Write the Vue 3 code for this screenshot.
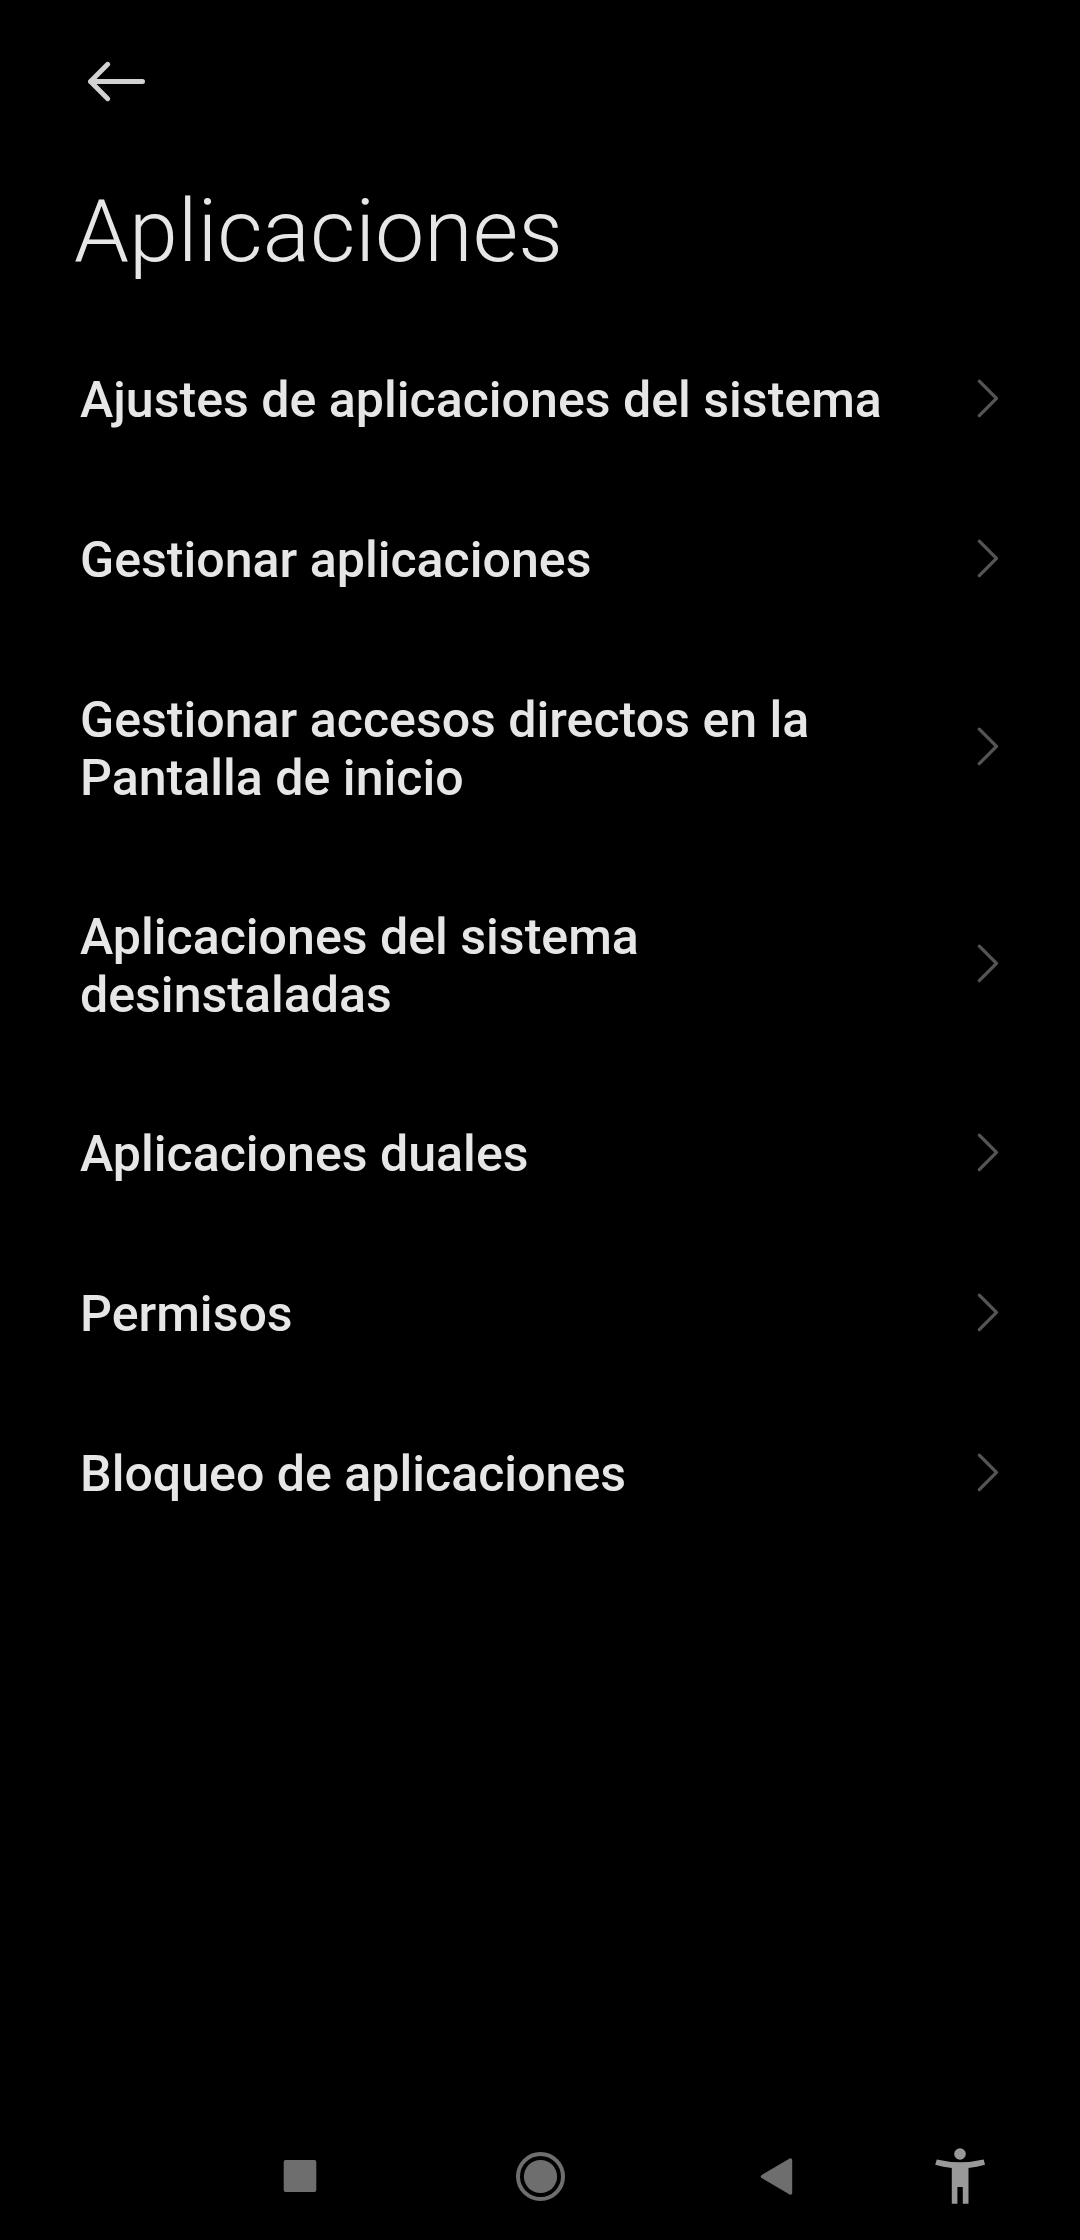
<script setup>
const items = [
  ['Ajustes de aplicaciones del sistema'],
  ['Gestionar aplicaciones'],
  ['Gestionar accesos directos en la', 'Pantalla de inicio'],
  ['Aplicaciones del sistema', 'desinstaladas'],
  ['Aplicaciones duales'],
  ['Permisos'],
  ['Bloqueo de aplicaciones'],
]
</script>

<template>
  <div class="screen">
    <header>
      <svg class="back" width="60" height="44" viewBox="86 60 60 44" fill="none" stroke="#d2d2d2" stroke-width="5" stroke-linecap="round" stroke-linejoin="round">
        <path d="M107.7 64.3 L90.5 81.5 L107.7 98.7 M90.5 81.5 H142.5" />
      </svg>
      <h1>Aplicaciones</h1>
    </header>
    <main>
      <div v-for="item in items" :key="item[0]" class="row" :class="{ double: item.length > 1 }">
        <div class="label"><div v-for="line in item" :key="line">{{ line }}</div></div>
        <svg class="chevron" width="24" height="40" viewBox="0 0 24 40" fill="none" stroke="#545454" stroke-width="3.3" stroke-linecap="round" stroke-linejoin="round">
          <path d="M3.3 3.2 L20.5 20.4 L3.3 37.6" />
        </svg>
      </div>
    </main>
    <nav>
      <svg width="1080" height="128" viewBox="0 2112 1080 128">
        <rect x="283.7" y="2160" width="32.6" height="32" rx="2" fill="#6e6e6e" />
        <circle cx="540.5" cy="2176.5" r="22.5" fill="none" stroke="#6e6e6e" stroke-width="4" />
        <circle cx="540.5" cy="2176.5" r="16.6" fill="#6e6e6e" />
        <path d="M762.5 2176.5 L790.5 2160 V2193 Z" fill="#6e6e6e" stroke="#6e6e6e" stroke-width="3.4" stroke-linejoin="round" />
        <circle cx="960" cy="2154" r="5.8" fill="#999" />
        <path d="M936.8 2159.5 Q960 2165 983.7 2159.5 L985 2164.7 Q977 2167 968.5 2168 V2203.7 H962.8 V2187 H957.4 V2203.7 H951.8 V2168 Q943 2167 935.2 2164.7 Z" fill="#999" />
      </svg>
    </nav>
  </div>
</template>

<style>
body { margin: 0; background: #000; }
</style>
<style scoped>
.screen { width: 1080px; height: 2240px; display: flex; flex-direction: column; background: #000; color: #e6e6e6; font-family: Roboto, sans-serif; overflow: hidden; }
header { height: 320px; box-sizing: border-box; padding: 60px 74px 0; }
.back { display: block; margin-left: 12px; }
h1 { margin: 75px 0 0; font-size: 88px; line-height: 103px; font-weight: 300; }
main { flex: 1; }
.row { display: flex; align-items: center; justify-content: space-between; padding: 51px 80px; }
.row.double { padding-bottom: 50px; }
.label { font-size: 50.12px; line-height: 58px; font-weight: 500; white-space: nowrap; }
.chevron { flex: none; margin-bottom: 4px; }
.double .chevron { margin-bottom: 6px; }
nav { height: 128px; }
nav svg { display: block; }
</style>
